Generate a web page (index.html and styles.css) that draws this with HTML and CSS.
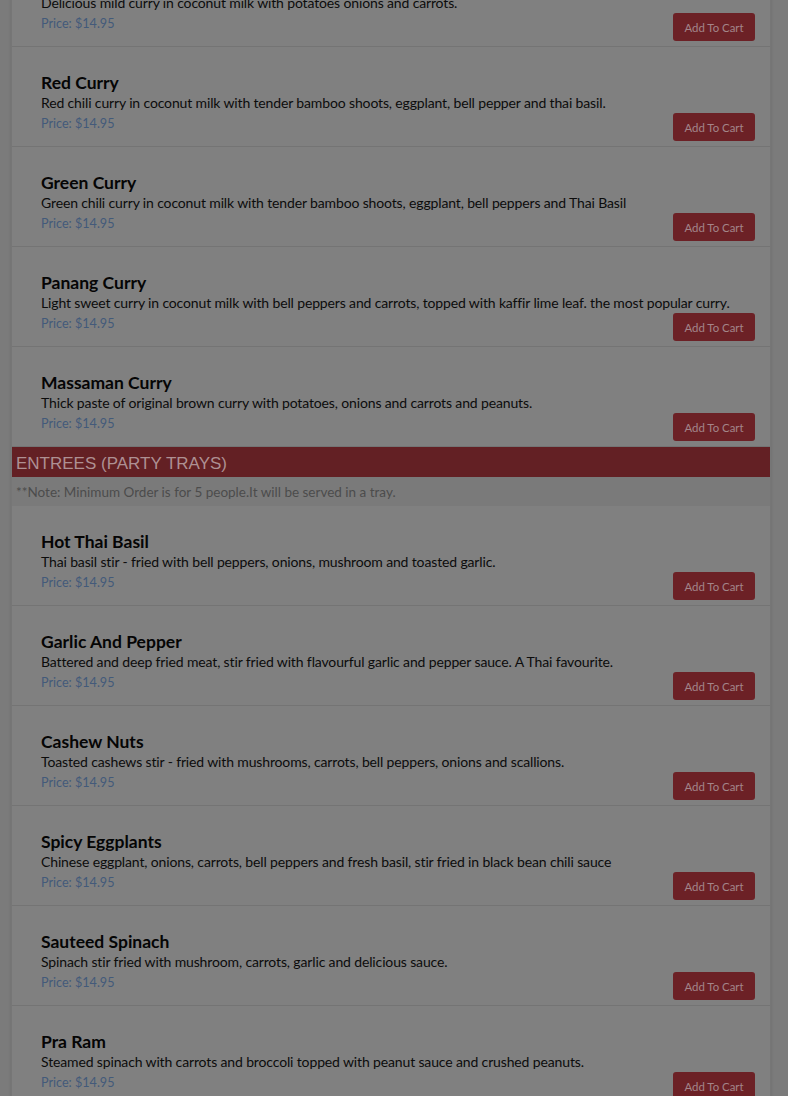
FILE: index.html
```html
<!DOCTYPE html>
<html lang="en">
<head>
  <meta charset="UTF-8">
  <meta name="viewport" content="width=device-width, initial-scale=1.0">
  <title>Menu</title>
  <link rel="stylesheet" href="styles.css">
</head>
<body>

<div class="menu">

  <!-- Curries -->
  <div class="item">
    <h3 class="item-name">Yellow Curry</h3>
    <p class="item-desc">Delicious mild curry in coconut milk with potatoes onions and carrots.</p>
    <div class="item-foot">
      <span class="price">Price: $14.95</span>
      <button class="add">Add To Cart</button>
    </div>
  </div>

  <div class="item">
    <h3 class="item-name">Red Curry</h3>
    <p class="item-desc">Red chili curry in coconut milk with tender bamboo shoots, eggplant, bell pepper and thai basil.</p>
    <div class="item-foot">
      <span class="price">Price: $14.95</span>
      <button class="add">Add To Cart</button>
    </div>
  </div>

  <div class="item">
    <h3 class="item-name">Green Curry</h3>
    <p class="item-desc">Green chili curry in coconut milk with tender bamboo shoots, eggplant, bell peppers and Thai Basil</p>
    <div class="item-foot">
      <span class="price">Price: $14.95</span>
      <button class="add">Add To Cart</button>
    </div>
  </div>

  <div class="item">
    <h3 class="item-name">Panang Curry</h3>
    <p class="item-desc">Light sweet curry in coconut milk with bell peppers and carrots, topped with kaffir lime leaf. the most popular curry.</p>
    <div class="item-foot">
      <span class="price">Price: $14.95</span>
      <button class="add">Add To Cart</button>
    </div>
  </div>

  <div class="item">
    <h3 class="item-name">Massaman Curry</h3>
    <p class="item-desc">Thick paste of original brown curry with potatoes, onions and carrots and peanuts.</p>
    <div class="item-foot">
      <span class="price">Price: $14.95</span>
      <button class="add">Add To Cart</button>
    </div>
  </div>

  <!-- Party trays -->
  <div class="section-head">ENTREES (PARTY TRAYS)</div>
  <div class="section-note">**Note: Minimum Order is for 5 people.It will be served in a tray.</div>

  <div class="item">
    <h3 class="item-name">Hot Thai Basil</h3>
    <p class="item-desc">Thai basil stir - fried with bell peppers, onions, mushroom and toasted garlic.</p>
    <div class="item-foot">
      <span class="price">Price: $14.95</span>
      <button class="add">Add To Cart</button>
    </div>
  </div>

  <div class="item">
    <h3 class="item-name">Garlic And Pepper</h3>
    <p class="item-desc">Battered and deep fried meat, stir fried with flavourful garlic and pepper sauce. A Thai favourite.</p>
    <div class="item-foot">
      <span class="price">Price: $14.95</span>
      <button class="add">Add To Cart</button>
    </div>
  </div>

  <div class="item">
    <h3 class="item-name">Cashew Nuts</h3>
    <p class="item-desc">Toasted cashews stir - fried with mushrooms, carrots, bell peppers, onions and scallions.</p>
    <div class="item-foot">
      <span class="price">Price: $14.95</span>
      <button class="add">Add To Cart</button>
    </div>
  </div>

  <div class="item">
    <h3 class="item-name">Spicy Eggplants</h3>
    <p class="item-desc">Chinese eggplant, onions, carrots, bell peppers and fresh basil, stir fried in black bean chili sauce</p>
    <div class="item-foot">
      <span class="price">Price: $14.95</span>
      <button class="add">Add To Cart</button>
    </div>
  </div>

  <div class="item">
    <h3 class="item-name">Sauteed Spinach</h3>
    <p class="item-desc">Spinach stir fried with mushroom, carrots, garlic and delicious sauce.</p>
    <div class="item-foot">
      <span class="price">Price: $14.95</span>
      <button class="add">Add To Cart</button>
    </div>
  </div>

  <div class="item">
    <h3 class="item-name">Pra Ram</h3>
    <p class="item-desc">Steamed spinach with carrots and broccoli topped with peanut sauce and crushed peanuts.</p>
    <div class="item-foot">
      <span class="price">Price: $14.95</span>
      <button class="add">Add To Cart</button>
    </div>
  </div>

</div>

</body>
</html>
```
FILE: styles.css
```css
body {
  margin: 0;
  background: #7b7b7b;
  font-family: Lato, "Liberation Sans", sans-serif;
  overflow: hidden;
}
.menu {
  width: 758px;
  margin: -53px 0 0 11px;
  background: #808080;
  border-left: 1px solid #767676;
  border-right: 1px solid #767676;
  box-shadow: 0 0 3px rgba(0,0,0,0.12);
}
.item {
  padding: 26px 15px 5px 29px;
  border-bottom: 1px solid #747474;
}
.item-name {
  margin: 0;
  font-size: 17.5px;
  line-height: 20px;
  font-weight: 700;
  color: #050505;
}
.item-desc {
  margin: 0;
  font-size: 14px;
  line-height: 20px;
  letter-spacing: -0.14px;
  color: #0c0c0c;
}
.item-foot {
  display: flex;
  justify-content: space-between;
  align-items: flex-start;
}
.price {
  font-size: 12.6px;
  line-height: 21px;
  color: #435a7a;
}
.add {
  width: 82px;
  height: 28px;
  padding: 0;
  border: none;
  border-radius: 3px;
  background: #6c2126;
  color: #a3858a;
  font-family: Lato, "Liberation Sans", sans-serif;
  font-size: 11.4px;
  cursor: pointer;
}
.section-head {
  height: 30px;
  line-height: 34px;
  padding-left: 4px;
  background: #632024;
  color: #ae9093;
  font-family: "Liberation Sans", Arial, sans-serif;
  font-size: 17px;
}
.section-note {
  height: 29px;
  line-height: 30px;
  padding-left: 4px;
  background: #7a7a7a;
  color: #4c4c4c;
  font-size: 13.5px;
}
```
